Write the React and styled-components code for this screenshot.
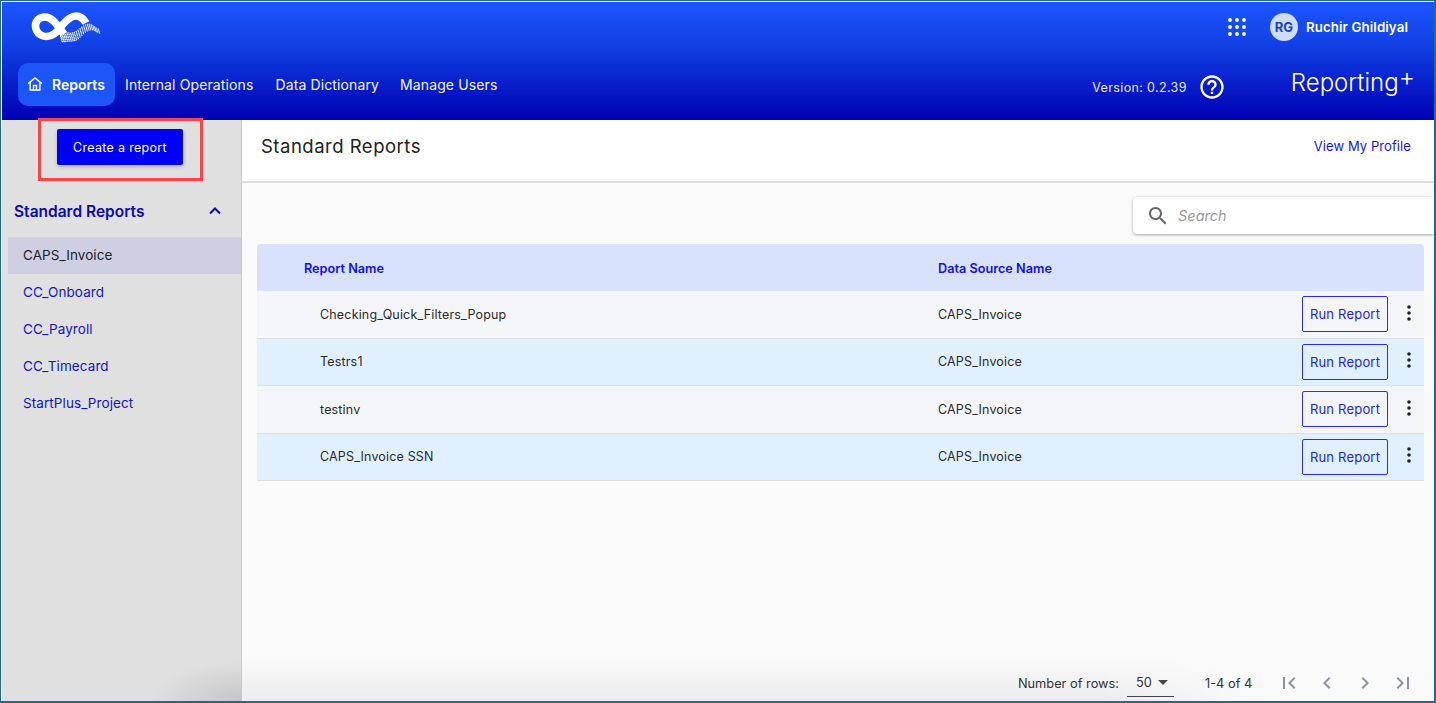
import React from "react";
import styled, { createGlobalStyle } from "styled-components";

const Global = createGlobalStyle`
  html, body { margin: 0; padding: 0; background: #fff; }
  * { box-sizing: border-box; }
  body { font-family: Inter, "Liberation Sans", sans-serif; }
`;

const Frame = styled.div`
  width: 1436px; height: 703px; display: flex; flex-direction: column;
  overflow: hidden; background: #fff;
  border-style: solid; border-color: #1f6a94; border-width: 1px 2px 2px 1px;
  padding: 1px 0 0 1px;
`;
const Header = styled.header`
  height: 118px; flex: none; display: flex; flex-direction: column;
  background: linear-gradient(180deg, #1c55ff 0%, #1242e6 35%, #0000b4 100%);
  color: #fff;
`;
const TopRow = styled.div`
  height: 50px; display: flex; align-items: center; padding: 0 26px 0 28px; flex: none;
`;
const Logo = styled.svg`width: 72px; height: 34px; flex: none;`;
const Spacer = styled.div`flex: 1;`;
const Grid = styled.svg`width: 18px; height: 18px; margin-right: 24px;`;
const Avatar = styled.div`
  width: 28px; height: 28px; border-radius: 50%; background: #cfdcf8; color: #1546b8;
  font-size: 13px; font-weight: 700; display: flex; align-items: center; justify-content: center;
`;
const UserName = styled.div`font-size: 13.3px; font-weight: 600; margin-left: 8px; letter-spacing: 0.1px;`;
const NavRow = styled.div`
  flex: 1; display: flex; align-items: flex-start; padding: 11px 20px 0 16px;
`;
const NavActive = styled.div`
  width: 97px; height: 43px; border-radius: 10px; background: #1c55f8; display: flex;
  align-items: center; padding: 0 0 1px 8px; gap: 8px; font-size: 14px; font-weight: 600;
`;
const NavLink = styled.div`
  height: 43px; display: flex; align-items: center; font-size: 14px; letter-spacing: 0.12px; padding-bottom: 1px;
  margin-left: ${p => p.$ml}px; color: #f2f4ff;
`;
const Version = styled.div`
  font-size: 12.5px; letter-spacing: 0.36px; color: #e6e9ff; height: 43px; display: flex; align-items: center; margin-top: 3px;
  margin-left: auto;
`;
const Help = styled.svg`width: 28px; height: 28px; margin: 10px 65px 0 11px; flex: none;`;
const Brand = styled.div`
  font-size: 24px; font-weight: 300; margin-top: 4px; display: flex;
  line-height: 32px;
  sup { font-size: 25px; line-height: 22px; margin: -1px -1px 0 0; font-weight: 300; }
`;
const Body = styled.div`flex: 1; display: flex; min-height: 0;`;
const Sidebar = styled.aside`
  width: 240px; flex: none; border-right: 1px solid #c8c8c8; display: flex; flex-direction: column;
  background: radial-gradient(ellipse 90px 40px at 100% 100%, #c6c6c6 0%, #e0e0e0 100%);
  background-color: #e0e0e0; position: relative;
`;
const Highlight = styled.div`
  position: absolute; left: 36px; top: -2px; width: 165px; height: 63px; border: 3px solid #fb4444; pointer-events: none;
`;
const CreateBtn = styled.button`
  align-self: flex-start; margin: 9px 0 0 55px; width: 126px; height: 36px; border: 0; border-radius: 2px;
  background: #0000f5; color: #fff; font: 400 12.5px Inter, sans-serif; letter-spacing: 0.3px;
  box-shadow: 0 2px 4px rgba(0,0,0,.2);
`;
const SideHead = styled.div`
  display: flex; align-items: center; justify-content: space-between; margin-top: 35px; height: 22px;
  padding: 0 18px 0 12px; font-size: 15.5px; font-weight: 600; color: #0a0ab0;
`;
const SideList = styled.div`margin: 15px 0 0 6px; display: flex; flex-direction: column;`;
const SideItem = styled.div`
  height: 37px; display: flex; align-items: center; padding: 0 0 1px 15px; font-size: 13.5px; letter-spacing: 0.08px;
  background: ${p => p.$active ? "#cfcfe4" : "transparent"};
  color: ${p => p.$active ? "#222" : "#1414c4"};
`;
const Main = styled.main`flex: 1; min-width: 0; display: flex; flex-direction: column; background: #fafafa;`;
const TitleBar = styled.div`
  height: 63px; flex: none; background: #fff; border-bottom: 2px solid #dedede; display: flex; align-items: center;
  justify-content: space-between; padding: 0 23px 10px 19px;
`;
const Title = styled.h1`margin: 0; font-size: 18.5px; font-weight: 400; letter-spacing: 0.5px; color: #222;`;
const Profile = styled.a`font-size: 13px; color: #1414f0; letter-spacing: 0.08px;`;
const SearchRow = styled.div`display: flex; justify-content: flex-end; padding-top: 14px; height: 61px; flex: none;`;
const SearchBox = styled.div`
  width: 301px; height: 37px; background: #fff; border-radius: 4px 0 0 4px; box-shadow: 0 1px 3px rgba(0,0,0,.35);
  display: flex; align-items: center; padding-left: 13px; gap: 8px;
  font-size: 14.5px; font-style: italic; color: #999;
`;
const Table = styled.div`margin: 0 10px 0 15px; display: flex; flex-direction: column;`;
const Head = styled.div`
  height: 47px; background: #d8e2fc; border-radius: 4px 4px 0 0; display: grid; grid-template-columns: 634px 1fr;
  align-items: center; padding: 1px 0 0 47px; font-size: 12.7px; font-weight: 600; color: #1010f0;
`;
const Row = styled.div`
  height: 47.5px; display: grid; grid-template-columns: 618px 1fr 86px 36px; align-items: center; padding-left: 63px;
  font-size: 12.5px; color: #2a2a2a; letter-spacing: 0.17px;
  background: ${p => p.$alt ? "#e1f0fe" : "#f4f5f8"};
  border-bottom: 1px solid #dddfe3;
`;
const RunBtn = styled.button`
  width: 86px; height: 36px; background: transparent; border: 1.5px solid #2c2cf0; border-radius: 2px;
  color: #2222ee; font: 400 13px Inter, sans-serif; letter-spacing: 0.2px; padding: 0;
`;
const Kebab = styled.svg`width: 24px; height: 24px; margin: -3px 0 0 9px;`;
const Pager = styled.div`
  margin-top: auto; height: 44px; flex: none; display: flex; align-items: center; justify-content: flex-end;
  padding: 8px 19px 0 0; font-size: 12.8px; color: #333;
  background:
    linear-gradient(90deg, rgba(250,250,250,0) 72%, #fafafa 86%),
    linear-gradient(180deg, rgba(230,230,230,0) 0%, #ececec 100%);
`;
const RowSelect = styled.div`
  width: 47px; height: 27px; margin-left: 8px; border-bottom: 1px solid #444; display: flex; align-items: center;
  padding: 0 0 0 9px; gap: 6px;
`;
const Caret = styled.svg`width: 10px; height: 5px;`;
const Count = styled.div`margin: 0 12px 0 31px; width: 46px; white-space: nowrap;`;
const PageIcon = styled.svg`width: 24px; height: 24px; margin-left: 14px; fill: #8d93a0;`;

const smooth = v => { const t = Math.min(1, Math.max(0, v)); return t * t * (3 - 2 * t); };
const dots = [];
for (let i = 0; i < 22; i++) {
  const t = i / 21;
  const cy = 27 - 10 * smooth((t - 0.3) / 0.45) + 4 * smooth((t - 0.8) / 0.2);
  const spread = 9 - t * 4.5;
  for (let j = 0; j < 6; j++) {
    const off = (j / 5 - 0.5) * spread;
    dots.push(<circle key={`${i}-${j}`} cx={31 + t * 38 + off * 0.3} cy={cy + off} r={0.85 - t * 0.3} fill="#fff" />);
  }
}

const rows = ["Checking_Quick_Filters_Popup", "Testrs1", "testinv", "CAPS_Invoice SSN"];
const side = ["CAPS_Invoice", "CC_Onboard", "CC_Payroll", "CC_Timecard", "StartPlus_Project"];

export default function App() {
  return (
    <Frame>
      <Global />
      <Header>
        <TopRow>
          <Logo viewBox="0 0 72 34">
            <path fill="none" stroke="#fff" strokeWidth="7.5" d="M34 24C28 16 22 6 14 7 8 8 4 12 6 19c2 7 11 10 18 5 6-4 9-12 16-16 6-4 12-2 16 5" />
            {dots}
          </Logo>
          <Spacer />
          <Grid viewBox="0 0 18 18" fill="#fff">
            {[2, 9, 16].flatMap(y => [2, 9, 16].map(x => <circle key={`${x}${y}`} cx={x} cy={y} r="1.9" />))}
          </Grid>
          <Avatar>RG</Avatar>
          <UserName>Ruchir Ghildiyal</UserName>
        </TopRow>
        <NavRow>
          <NavActive>
            <svg width="18" height="18" viewBox="0 0 24 24" fill="none" stroke="#fff" strokeWidth="1.9"><path d="M3 11.5 12 4l9 7.5" /><path d="M5.5 10v10h13V10" /><path d="M10 20v-6h4v6" /></svg>
            Reports
          </NavActive>
          <NavLink $ml={10}>Internal Operations</NavLink>
          <NavLink $ml={22}>Data Dictionary</NavLink>
          <NavLink $ml={21}>Manage Users</NavLink>
          <Version>Version: 0.2.39</Version>
          <Help viewBox="0 0 24 24" fill="#fff"><path d="M11 18h2v-2h-2v2zm1-16C6.48 2 2 6.48 2 12s4.48 10 10 10 10-4.48 10-10S17.52 2 12 2zm0 18c-4.41 0-8-3.59-8-8s3.59-8 8-8 8 3.59 8 8-3.59 8-8 8zm0-14c-2.21 0-4 1.79-4 4h2c0-1.1.9-2 2-2s2 .9 2 2c0 2-3 1.75-3 5h2c0-2.25 3-2.5 3-5 0-2.21-1.79-4-4-4z" /></Help>
          <Brand>Reporting<sup>+</sup></Brand>
        </NavRow>
      </Header>
      <Body>
        <Sidebar>
          <Highlight />
          <CreateBtn>Create a report</CreateBtn>
          <SideHead>
            Standard Reports
            <svg width="16" height="16" viewBox="0 0 16 16" fill="none" stroke="#0a0ab0" strokeWidth="2"><path d="M3 10.5 8 5.5l5 5" /></svg>
          </SideHead>
          <SideList>
            {side.map((s, i) => <SideItem key={s} $active={i === 0}>{s}</SideItem>)}
          </SideList>
        </Sidebar>
        <Main>
          <TitleBar>
            <Title>Standard Reports</Title>
            <Profile>View My Profile</Profile>
          </TitleBar>
          <SearchRow>
            <SearchBox>
              <svg width="24" height="24" viewBox="0 0 24 24" fill="#666"><path d="M15.5 14h-.79l-.28-.27C15.41 12.59 16 11.11 16 9.5 16 5.91 13.09 3 9.5 3S3 5.91 3 9.5 5.91 16 9.5 16c1.61 0 3.09-.59 4.23-1.57l.27.28v.79l5 4.99L20.49 19l-4.99-5zm-6 0C7.01 14 5 11.99 5 9.5S7.01 5 9.5 5 14 7.01 14 9.5 11.99 14 9.5 14z" /></svg>
              Search
            </SearchBox>
          </SearchRow>
          <Table>
            <Head>
              <div>Report Name</div>
              <div>Data Source Name</div>
            </Head>
            {rows.map((r, i) => (
              <Row key={r} $alt={i % 2 === 1}>
                <div>{r}</div>
                <div>CAPS_Invoice</div>
                <RunBtn>Run Report</RunBtn>
                <Kebab viewBox="0 0 24 24" fill="#222"><circle cx="12" cy="6" r="1.8" /><circle cx="12" cy="12" r="1.8" /><circle cx="12" cy="18" r="1.8" /></Kebab>
              </Row>
            ))}
          </Table>
          <Pager>
            <div>Number of rows:</div>
            <RowSelect>50<Caret viewBox="7 10 10 5" fill="#444" preserveAspectRatio="none"><path d="M7 10l5 5 5-5z" /></Caret></RowSelect>
            <Count>1-4 of 4</Count>
            <PageIcon viewBox="0 0 24 24"><path d="M18.41 16.59 13.82 12l4.59-4.59L17 6l-6 6 6 6zM6 6h2v12H6z" /></PageIcon>
            <PageIcon viewBox="0 0 24 24"><path d="M15.41 7.41 14 6l-6 6 6 6 1.41-1.41L10.83 12z" /></PageIcon>
            <PageIcon viewBox="0 0 24 24"><path d="M10 6 8.59 7.41 13.17 12l-4.58 4.59L10 18l6-6z" /></PageIcon>
            <PageIcon viewBox="0 0 24 24"><path d="M5.59 7.41 10.18 12l-4.59 4.59L7 18l6-6-6-6zM16 6h2v12h-2z" /></PageIcon>
          </Pager>
        </Main>
      </Body>
    </Frame>
  );
}
